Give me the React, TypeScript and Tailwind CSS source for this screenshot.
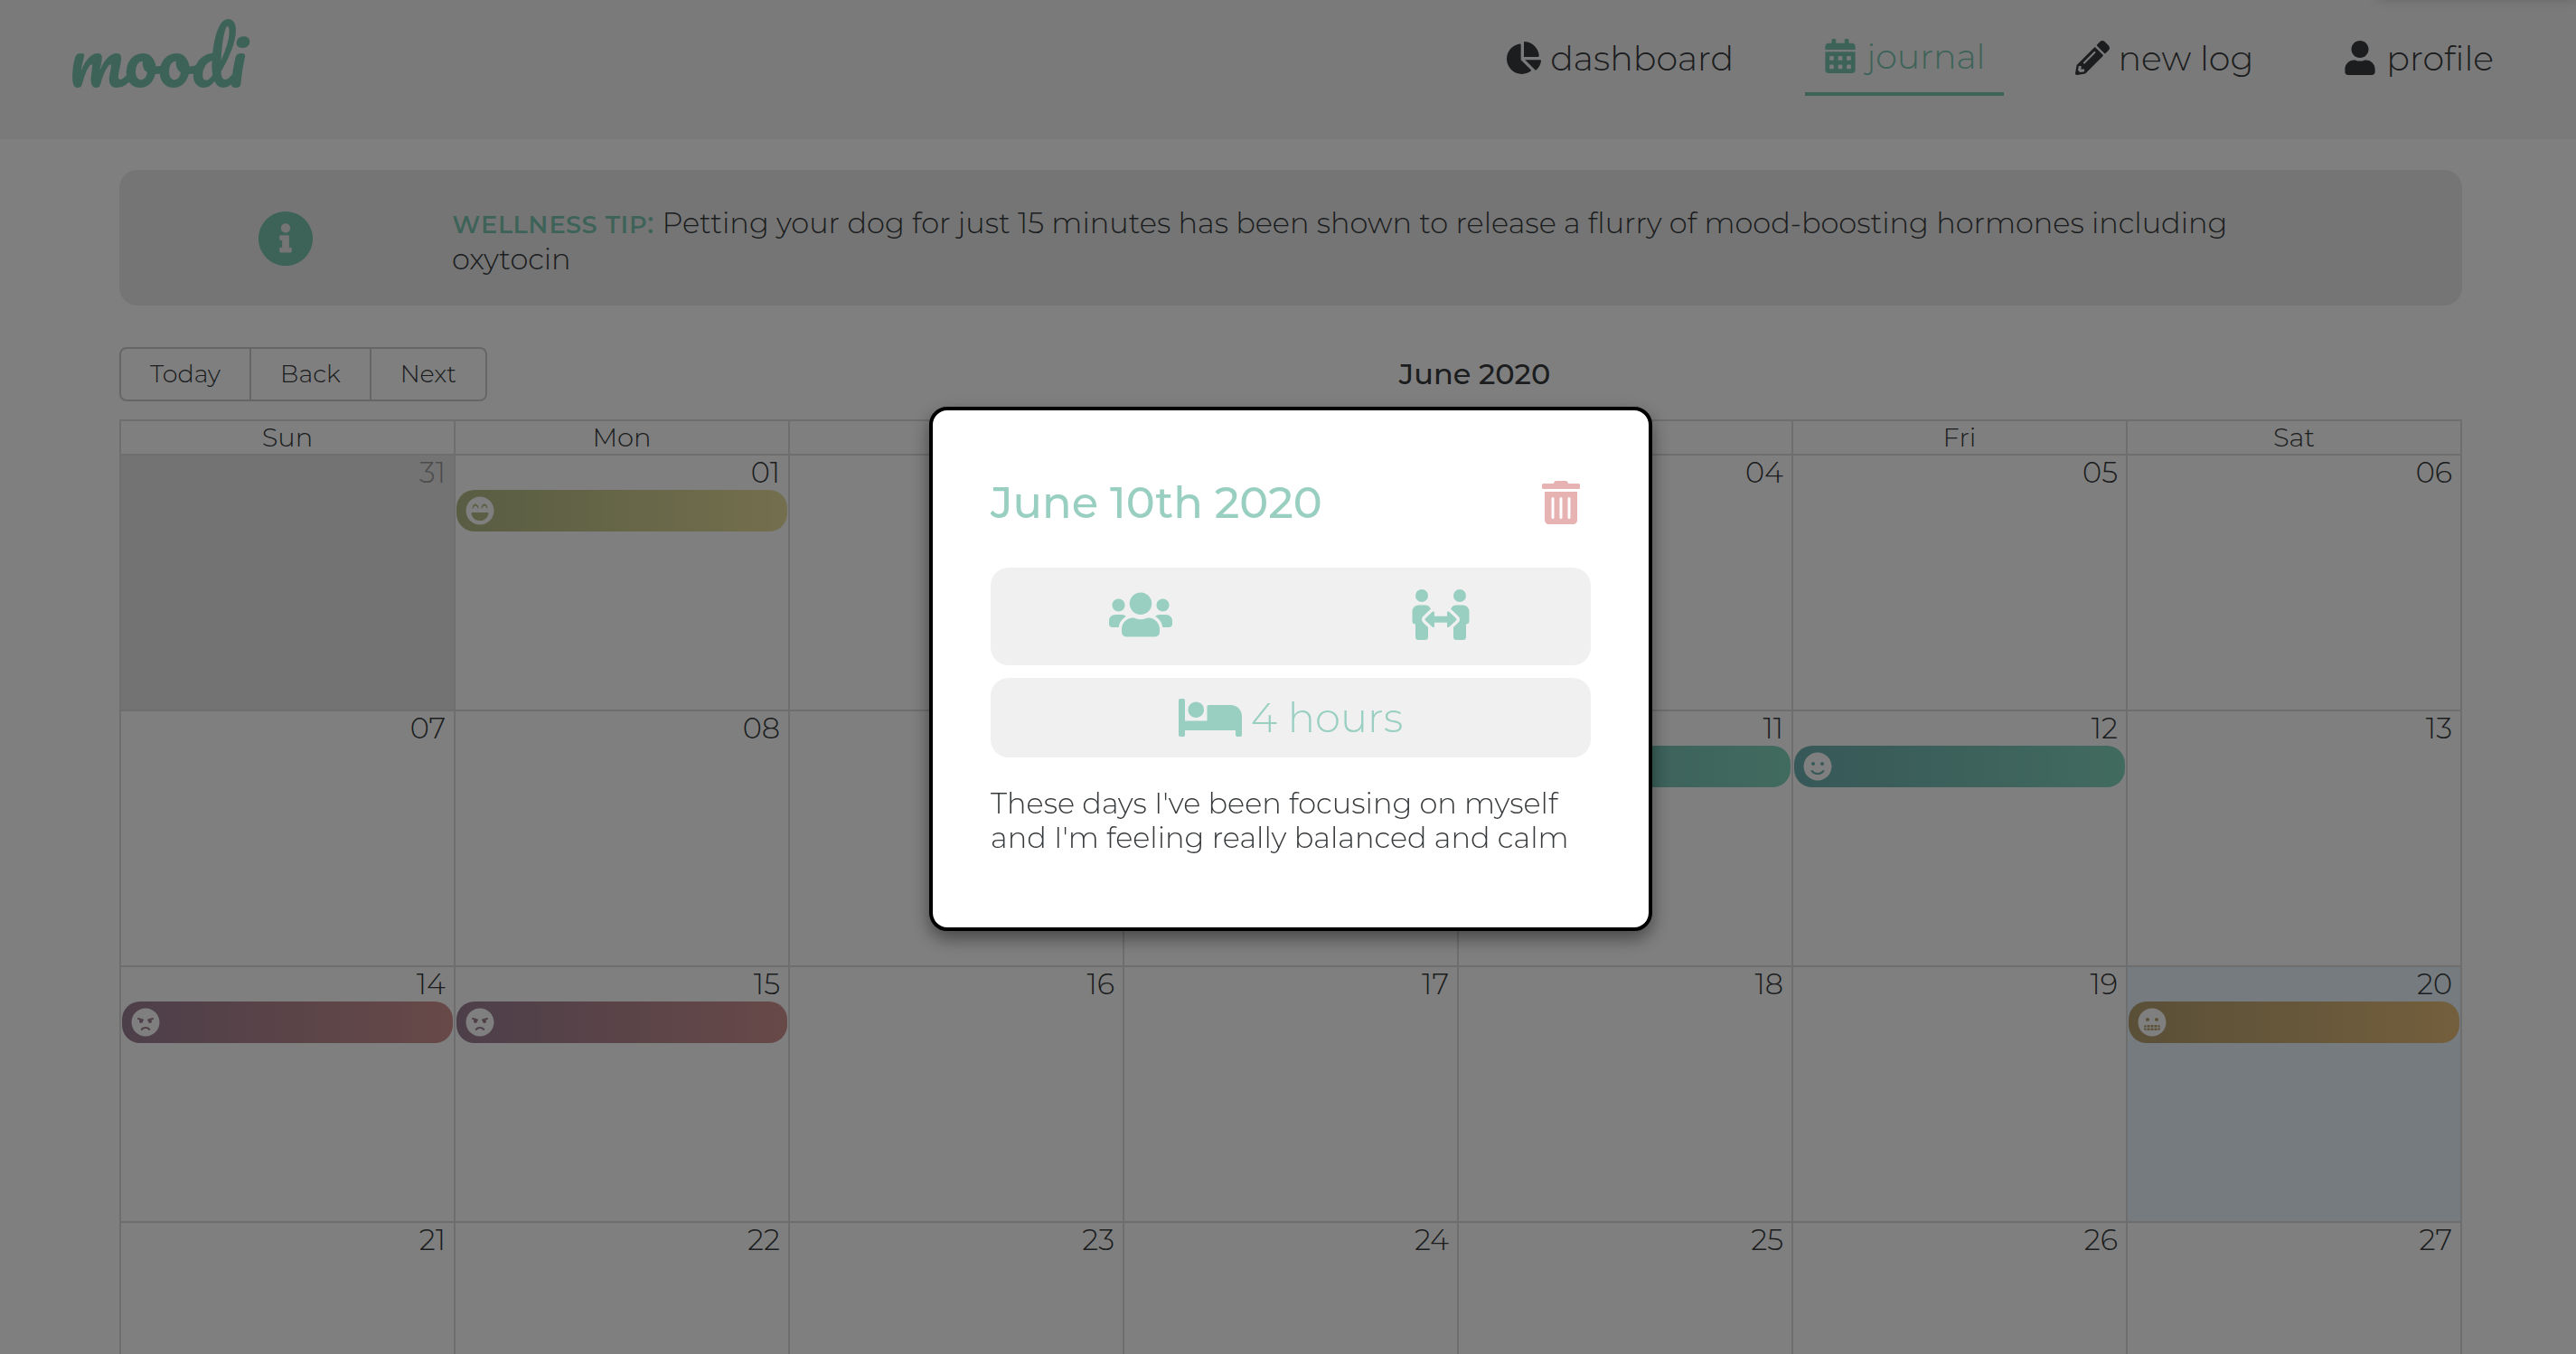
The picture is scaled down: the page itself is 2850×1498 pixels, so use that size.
import React from "react";
import {
  FaAngry,
  FaBed,
  FaCalendarAlt,
  FaChartPie,
  FaGrimace,
  FaInfoCircle,
  FaLaughBeam,
  FaPencilAlt,
  FaPeopleArrows,
  FaSmile,
  FaTrashAlt,
  FaUser,
  FaUsers,
} from "react-icons/fa";
import type { IconType } from "react-icons";

const NAV: { label: string; icon: IconType; active?: boolean }[] = [
  { label: "dashboard", icon: FaChartPie },
  { label: "journal", icon: FaCalendarAlt, active: true },
  { label: "new log", icon: FaPencilAlt },
  { label: "profile", icon: FaUser },
];

const DAYS = ["Sun", "Mon", "Tue", "Wed", "Thu", "Fri", "Sat"];

const WEEKS = [
  ["31", "01", "02", "03", "04", "05", "06"],
  ["07", "08", "09", "10", "11", "12", "13"],
  ["14", "15", "16", "17", "18", "19", "20"],
  ["21", "22", "23", "24", "25", "26", "27"],
];

const MOODS: Record<string, { name: string; icon: IconType; tone: string }> = {
  "01": { name: "happy", icon: FaLaughBeam, tone: "from-[#b2ba86] to-[#e8de9c]" },
  "11": { name: "calm", icon: FaSmile, tone: "from-[#6eb0b0] to-[#84d6be]" },
  "12": { name: "calm", icon: FaSmile, tone: "from-[#6eb0b0] to-[#84d6be]" },
  "14": { name: "angry", icon: FaAngry, tone: "from-[#9a7e92] to-[#d09290]" },
  "15": { name: "angry", icon: FaAngry, tone: "from-[#9a7e92] to-[#d09290]" },
  "20": { name: "anxious", icon: FaGrimace, tone: "from-[#b4a070] to-[#e8be7a]" },
};

function Header() {
  return (
    <header className="flex h-[154px] items-start justify-between bg-[#f4f4f4] pr-[71px] pl-[76px]">
      <a
        href="#home"
        className="font-['Pacifico','Lato',cursive] text-[82px] leading-[124px] text-[#7ac6b0]"
      >
        moodi
      </a>
      <nav className="flex gap-[59px] pt-6">
        {NAV.map(({ label, icon: Icon, active }) => (
          <a
            key={label}
            href={`#${label}`}
            className={
              active
                ? "flex h-[82px] items-center gap-[10px] border-b-4 border-[#7ac6b0] px-5 pb-[2px] text-[38px] text-[#7ac6b0]"
                : "flex h-[82px] items-center gap-[10px] px-5 pb-[2px] text-[38px] text-[#373a3c]"
            }
          >
            <Icon className="h-[38px] w-auto shrink-0" />
            {label}
          </a>
        ))}
      </nav>
    </header>
  );
}

function WellnessTip() {
  return (
    <section className="flex h-[150px] items-center rounded-[20px] bg-[#eaeaea]">
      <div className="flex w-[368px] shrink-0 justify-center pt-[2px]">
        <FaInfoCircle className="size-[62px] text-[#7ac6b0]" />
      </div>
      <p className="flex-1 pt-2 pr-[184px] text-[32px] leading-10">
        <span className="text-[33px] leading-none font-medium text-[#7ac6b0] [font-variant-caps:small-caps]">
          wellness tip:{" "}
        </span>
        Petting your dog for just 15 minutes has been shown to release a flurry of mood-boosting
        hormones including oxytocin
      </p>
    </section>
  );
}

function Toolbar() {
  return (
    <div className="mt-[46px] mb-5 flex items-center">
      <div className="flex overflow-hidden rounded-lg border-2 border-[#ccc]">
        {["Today", "Back", "Next"].map((label) => (
          <button
            key={label}
            type="button"
            className="h-14 border-l-2 border-[#ccc] px-8 text-[27px] first:border-l-0"
          >
            {label}
          </button>
        ))}
      </div>
      <h1 className="flex-1 text-center text-[32px] font-medium">June 2020</h1>
    </div>
  );
}

function DayCell({ day }: { day: string }) {
  const mood = MOODS[day];
  const tone =
    day === "31" ? "bg-[#e6e6e6] text-[#999]" : day === "20" ? "bg-[#eaf6ff]" : "";
  const Icon = mood?.icon;
  return (
    <td className={`h-[283px] border-t-2 border-l-2 border-[#ddd] p-0 align-top ${tone}`}>
      <div className="pr-[9px] text-right text-[32px] leading-[38px]">{day}</div>
      {Icon && (
        <button
          type="button"
          aria-label={mood.name}
          className={`mx-px flex h-[46px] w-[calc(100%-2px)] items-center rounded-[20px] bg-linear-to-r px-[10px] ${mood.tone}`}
        >
          <Icon className="size-8 text-white" />
        </button>
      )}
    </td>
  );
}

function Calendar() {
  return (
    <table className="w-full table-fixed border-separate border-spacing-0 border-r-2 border-[#ddd]">
      <thead>
        <tr>
          {DAYS.map((day) => (
            <th
              key={day}
              scope="col"
              className="h-[38px] border-t-2 border-l-2 border-[#ddd] p-0 text-[29px] leading-9 font-light"
            >
              {day}
            </th>
          ))}
        </tr>
      </thead>
      <tbody>
        {WEEKS.map((week) => (
          <tr key={week[0]}>
            {week.map((day) => (
              <DayCell key={day} day={day} />
            ))}
          </tr>
        ))}
      </tbody>
    </table>
  );
}

function EntryDialog() {
  return (
    <div className="fixed inset-0 flex items-center justify-center bg-black/50 pb-[18px] pl-[6px]">
      <div
        role="dialog"
        aria-modal="true"
        aria-labelledby="entry-title"
        className="w-[800px] rounded-[20px] border-4 border-black bg-white px-16 pt-[68px] pb-20 shadow-[0_8px_20px_rgba(0,0,0,0.45)]"
      >
        <div className="flex items-center justify-between pr-3">
          <h2 id="entry-title" className="text-[48px] leading-[68px] font-medium text-[#98cfc0]">
            June 10th 2020
          </h2>
          <button type="button" aria-label="Delete entry" className="text-[#e6b2b2]">
            <FaTrashAlt className="h-12 w-[42px]" />
          </button>
        </div>
        <div className="mt-[38px] grid h-[108px] grid-cols-2 place-items-center rounded-[20px] bg-[#f0f0f0] pb-1 text-[#98cfc0]">
          <FaUsers className="h-14 w-[70px]" />
          <FaPeopleArrows className="h-14 w-[64px]" />
        </div>
        <div className="mt-[14px] flex h-[88px] items-center justify-center gap-[10px] rounded-[20px] bg-[#f0f0f0] text-[45px] text-[#98cfc0]">
          <FaBed className="h-14 w-[70px]" />
          4 hours
        </div>
        <p className="mt-8 text-[32px] leading-[38px]">
          These days I've been focusing on myself and I'm feeling really balanced and calm
        </p>
      </div>
    </div>
  );
}

export default function App() {
  return (
    <div className="relative h-screen overflow-hidden bg-white font-['Montserrat','Inter',sans-serif] font-light text-[#373a3c]">
      <Header />
      <main className="pt-[34px] pr-[126px] pl-[132px]">
        <WellnessTip />
        <Toolbar />
        <Calendar />
      </main>
      <div className="absolute -top-4 right-0 h-3 w-[220px] shadow-[0_2px_14px_rgba(0,0,0,0.2)]" />
      <EntryDialog />
    </div>
  );
}
